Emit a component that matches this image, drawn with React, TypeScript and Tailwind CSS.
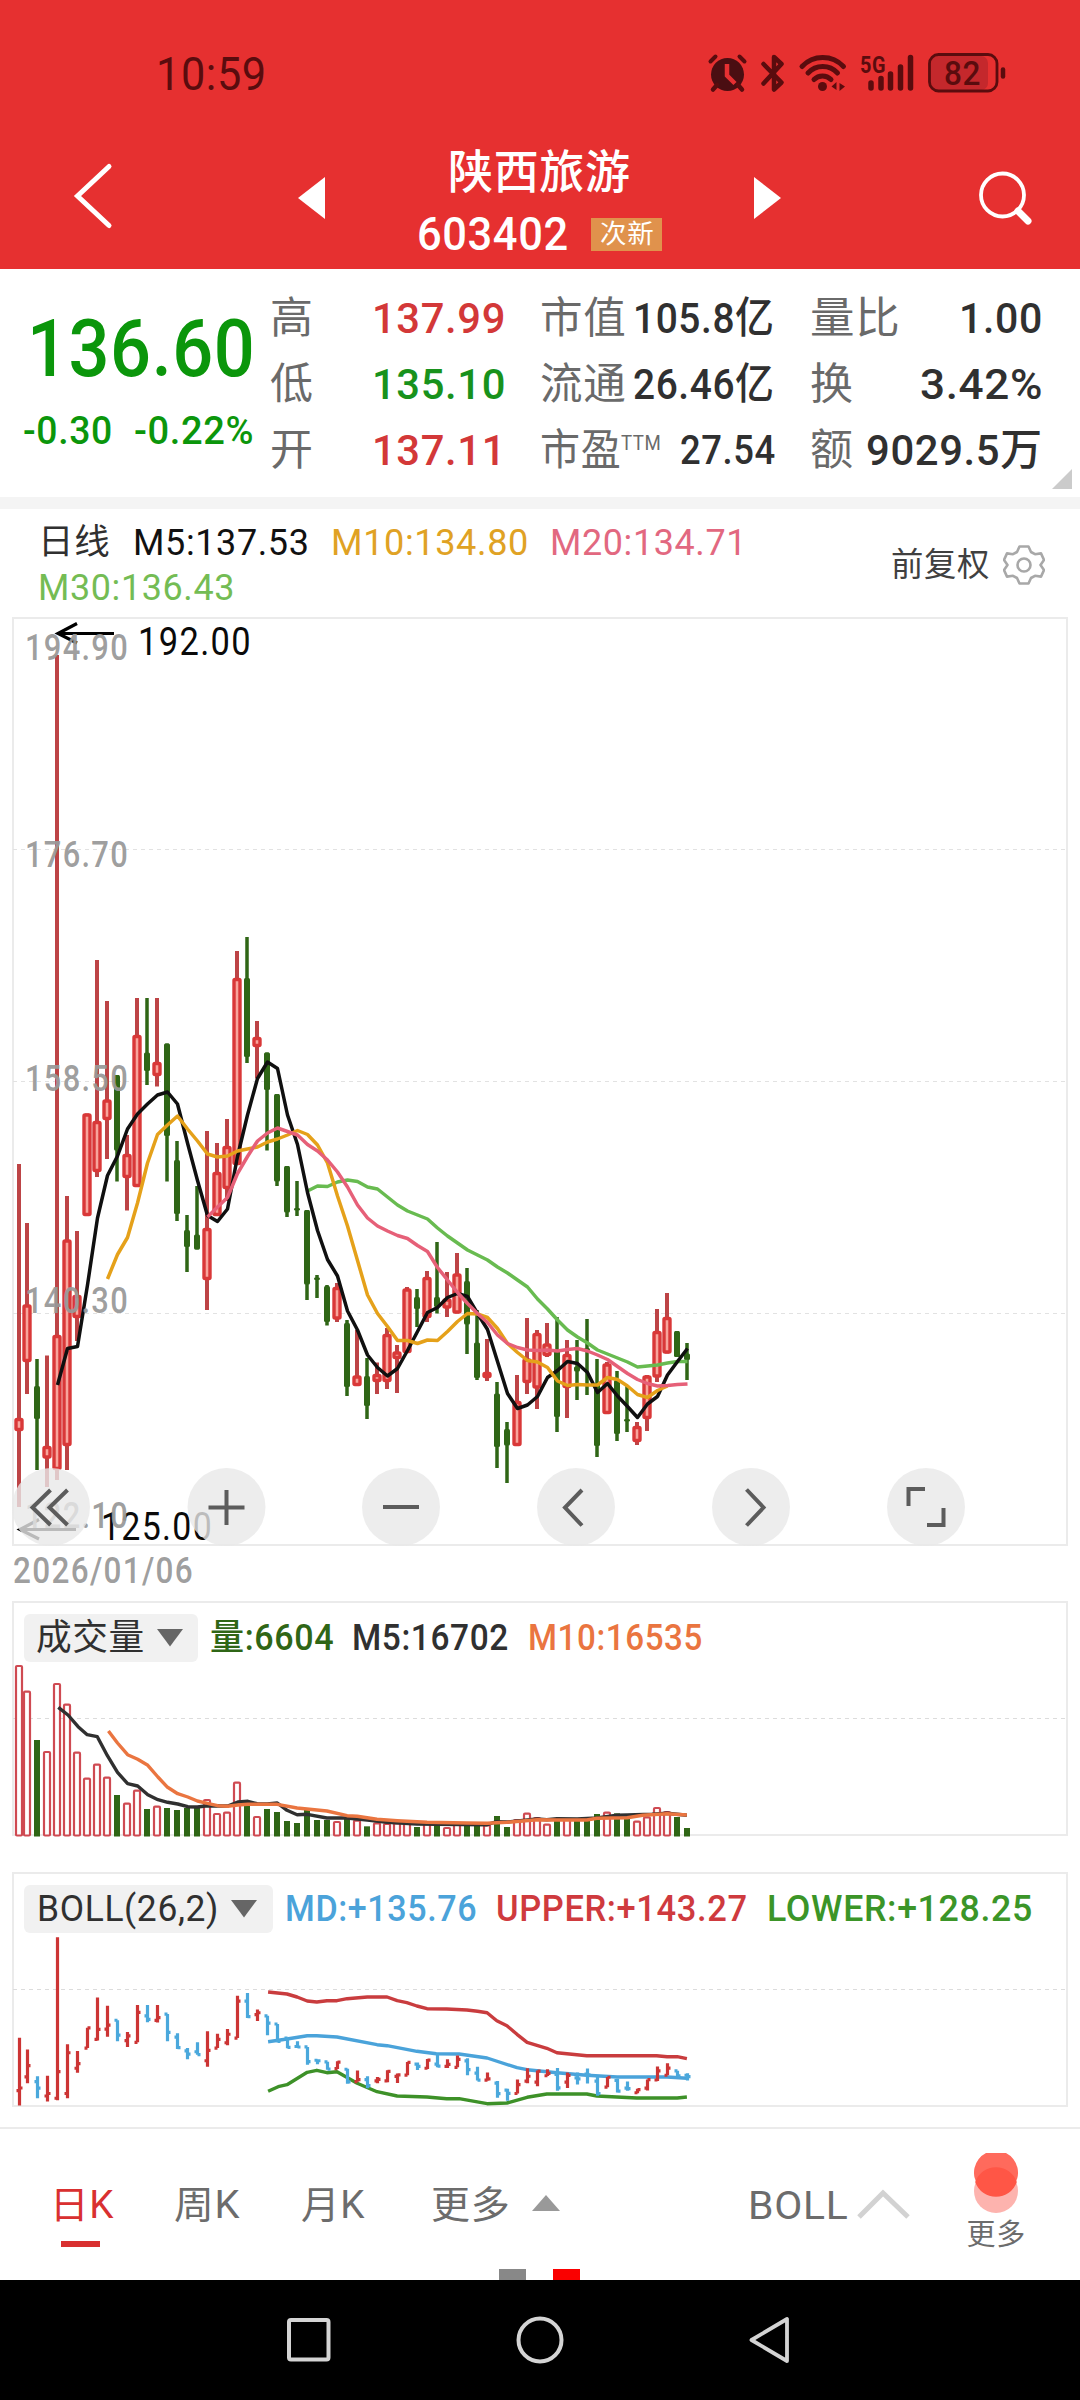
import React, { useLayoutEffect, useRef } from "react";

const FONT = "font-['Roboto','Noto_Sans_CJK_SC',sans-serif]";

/** One line of text that is condensed or widened to fill the width of its box. */
function Fit({ children, className = "" }: { children: React.ReactNode; className?: string }) {
  const box = useRef<HTMLDivElement>(null);
  const line = useRef<HTMLSpanElement>(null);
  useLayoutEffect(() => {
    if (!box.current || !line.current) return;
    line.current.style.transform = `scaleX(${box.current.clientWidth / line.current.offsetWidth})`;
  });
  return (
    <div ref={box} className={`shrink-0 whitespace-nowrap leading-none ${className}`}>
      <span ref={line} className="inline-block origin-left">
        {children}
      </span>
    </div>
  );
}

const RED = "#d93838";
const GREEN = "#2f6616";
const FRAME = "#ebebeb";

type Candle = [up: 0 | 1, high: number, top: number, bottom: number, low: number];

const candles: Candle[] = [
  [1, 1164, 1418, 1431, 1507], [1, 1223, 1304.5, 1362, 1394], [0, 1359, 1386, 1419, 1470], [1, 1355.5, 1446, 1458.5, 1487],
  [1, 655, 1335, 1470, 1480], [1, 1196, 1239.5, 1446, 1470], [1, 1231, 1295, 1318, 1341], [1, 1113.5, 1113.5, 1216, 1216],
  [1, 960, 1121, 1172, 1177], [1, 1001, 1099.5, 1120, 1159], [0, 1075, 1075, 1150.5, 1181.5], [1, 1135, 1154, 1178, 1210.5],
  [1, 998, 1035, 1187, 1187], [0, 998, 1052.5, 1071, 1085], [1, 998, 1062, 1076, 1086.5], [0, 1043.5, 1043.5, 1136, 1181.5],
  [0, 1141, 1160, 1214, 1221], [0, 1215, 1230, 1247, 1272], [0, 1186, 1234.5, 1249.5, 1249.5], [1, 1131, 1228, 1280, 1310],
  [1, 1143, 1172, 1216, 1216], [1, 1119, 1146, 1189, 1201], [1, 951, 978, 1165, 1165], [0, 937, 978, 1057, 1063],
  [1, 1021, 1037, 1047, 1078.5], [0, 1052.5, 1052.5, 1090, 1150.5], [0, 1094, 1094, 1181.5, 1186], [0, 1166, 1166, 1212.5, 1217],
  [0, 1181, 1208, 1210.5, 1216], [0, 1210, 1210, 1284.5, 1300], [0, 1275, 1277.5, 1280, 1298], [0, 1285, 1286, 1322, 1325.5],
  [1, 1283, 1287, 1319.5, 1322], [0, 1320, 1323, 1387, 1396], [1, 1330, 1375.5, 1386, 1386], [0, 1358, 1376, 1406, 1419],
  [1, 1362.5, 1374, 1382, 1394], [1, 1328, 1334, 1382, 1389], [1, 1345, 1351.5, 1359, 1393], [1, 1287, 1288.5, 1353, 1353],
  [0, 1289, 1297, 1309, 1327], [1, 1271, 1277, 1318, 1322], [0, 1242, 1297, 1307, 1313.5], [1, 1272, 1298.5, 1308.5, 1317],
  [1, 1253, 1273.5, 1313.5, 1313.5], [0, 1268, 1281, 1324.5, 1354], [0, 1310, 1342.5, 1378, 1380], [1, 1339, 1372, 1378, 1381],
  [0, 1382, 1393.5, 1447, 1468], [0, 1422, 1429, 1445.5, 1483], [1, 1375, 1401, 1446, 1446], [1, 1318, 1358.5, 1383, 1394],
  [1, 1330, 1333, 1388.5, 1409], [1, 1323, 1343.5, 1356, 1357], [0, 1317, 1349.5, 1417, 1432], [1, 1340, 1354, 1388, 1418],
  [0, 1340, 1366.5, 1371.5, 1400], [0, 1319, 1348, 1351, 1395], [0, 1359, 1383, 1446, 1457], [1, 1362, 1363.5, 1414, 1414],
  [0, 1371, 1380, 1434, 1441], [0, 1385, 1419, 1421.5, 1432], [1, 1422, 1426, 1442, 1445], [1, 1375, 1375.5, 1419, 1431],
  [1, 1309, 1331, 1377.5, 1382], [1, 1293, 1317, 1353.5, 1353.5], [0, 1331, 1331, 1357, 1357], [0, 1343, 1353.5, 1360, 1380],
];

const xOf = (i: number) => (i === 0 ? 19 : 17 + 10 * i);

/** Averages hold one value per day, beginning at the given day index. */
const averages: { color: string; start: number; ys: number[] }[] = [
  {
    color: "#68bb50", start: 29,
    ys: [1191, 1186, 1186.5, 1182, 1180, 1181.5, 1187, 1189, 1197, 1205, 1211, 1215, 1219, 1228, 1236, 1243, 1250, 1255, 1260, 1267, 1273, 1280, 1287, 1299, 1309, 1320, 1330, 1337, 1343, 1350, 1354, 1358, 1362, 1367, 1366, 1365, 1363, 1361.5, 1361.5],
  },
  {
    color: "#101010", start: 4,
    ys: [1385, 1348.5, 1346.5, 1285, 1218, 1175.5, 1156, 1129, 1114, 1104, 1095, 1092, 1104, 1143, 1180.5, 1215.5, 1221.5, 1209, 1156.5, 1115, 1078.5, 1062, 1068.5, 1115, 1144.5, 1192.5, 1230.5, 1259.5, 1276, 1311, 1330, 1355, 1367.5, 1376, 1368.5, 1350.5, 1331.5, 1312.5, 1307.5, 1297.5, 1293.5, 1296.5, 1313.5, 1329.5, 1361.5, 1393.5, 1408.5, 1405, 1396.5, 1377.5, 1370.5, 1361.5, 1363.5, 1372.5, 1392.5, 1383.5, 1396, 1406.5, 1417.5, 1404, 1396.5, 1375, 1361.5, 1348.5],
  },
  {
    color: "#e5a11a", start: 9,
    ys: [1279, 1254.5, 1237.5, 1203, 1163, 1134.5, 1125, 1116, 1129, 1141, 1154, 1157, 1156, 1151, 1149, 1147, 1142, 1139, 1135, 1130.5, 1134.5, 1145, 1163, 1196, 1226, 1260.5, 1295, 1313.5, 1326.5, 1340.5, 1340.5, 1343.5, 1340, 1340.5, 1331.5, 1321.5, 1313.5, 1314, 1317.5, 1328.5, 1343.5, 1352.5, 1360.5, 1362, 1367.5, 1381, 1385.5, 1384.5, 1385, 1385, 1377.5, 1379.5, 1386, 1394.5, 1397.5, 1390.5, 1386],
  },
  {
    color: "#e66078", start: 19,
    ys: [1217, 1207, 1197.5, 1173.5, 1156.5, 1141, 1133, 1128, 1131.5, 1135, 1144.5, 1151, 1160, 1172, 1187, 1205, 1218, 1226, 1231, 1235.5, 1238.5, 1245.5, 1251.5, 1267.5, 1280, 1292.5, 1303.5, 1313.5, 1322.5, 1335, 1343.5, 1347.5, 1350, 1350.5, 1350, 1351, 1349.5, 1348.5, 1351, 1355, 1359.5, 1366.5, 1373.5, 1379.5, 1383.5, 1386, 1385.5, 1384.5, 1384],
  },
];

/** Top edge of each volume bar, in thirds of a pixel below the panel's top. */
const volumeTops = [
  228, 305, 450, 486, 282, 344, 488, 566, 524, 563, 615, 641, 602, 657, 650, 654, 660, 654, 652, 630, 672, 668, 578, 648, 681, 657, 666,
  693, 699, 655, 690, 690, 696, 687, 692, 709, 700, 702, 700, 702, 711, 702, 706, 714, 704, 706, 706, 706, 678, 711, 690, 671, 684, 704,
  688, 690, 690, 692, 672, 668, 670, 684, 695, 682, 654, 666, 681, 714,
];

type Pt = [number, number];
const toPoints = (pts: Pt[]) => pts.map(([u, v]) => `${(u / 2.178).toFixed(1)},${(v / 3).toFixed(1)}`).join(" ");

const volM5: Pt[] = [[127, 352], [148, 375], [170, 410], [190, 434], [212, 440], [234, 497], [256, 547], [278, 581], [300, 588], [322, 614], [344, 629], [365, 637], [387, 642], [409, 650], [430, 651], [452, 647], [496, 648], [518, 636], [540, 634], [560, 641], [582, 642], [604, 639], [625, 661], [647, 674], [669, 673], [712, 684], [756, 684], [800, 690], [843, 697], [908, 702], [952, 703], [1061, 704], [1082, 695], [1104, 696], [1170, 687], [1191, 689], [1213, 686], [1257, 687], [1300, 684], [1344, 676], [1366, 675], [1420, 673], [1453, 670], [1496, 676]];
const volM10: Pt[] = [[236, 423], [256, 459], [278, 494], [300, 508], [322, 526], [344, 561], [365, 592], [387, 611], [409, 621], [430, 633], [452, 640], [474, 647], [496, 649], [518, 645], [540, 643], [604, 643], [647, 654], [712, 663], [756, 677], [778, 679], [821, 688], [865, 692], [930, 697], [1017, 699], [1061, 700], [1104, 697], [1170, 689], [1213, 690], [1278, 690], [1300, 685], [1366, 683], [1400, 676], [1453, 671], [1496, 675]];
const bollUpper: Pt[] = [[584, 396], [625, 402], [647, 411], [669, 423], [690, 426], [712, 422], [734, 422], [756, 416], [800, 411], [843, 411], [865, 422], [886, 428], [908, 438], [930, 446], [973, 447], [1017, 450], [1040, 454], [1061, 458], [1082, 482], [1104, 497], [1126, 523], [1148, 547], [1191, 565], [1213, 578], [1278, 587], [1430, 587], [1453, 590], [1475, 590], [1496, 596]];
const bollMid: Pt[] = [[584, 545], [625, 537], [669, 527], [690, 527], [734, 531], [821, 554], [843, 557], [908, 574], [950, 581], [1000, 582], [1061, 594], [1126, 623], [1148, 629], [1213, 638], [1278, 646], [1344, 651], [1453, 651], [1496, 655]];
const bollLower: Pt[] = [[584, 694], [606, 680], [625, 674], [669, 637], [690, 631], [712, 638], [734, 635], [778, 670], [821, 695], [865, 708], [930, 711], [973, 716], [1000, 716], [1061, 731], [1104, 729], [1148, 712], [1191, 702], [1278, 702], [1300, 708], [1387, 714], [1475, 714], [1496, 711]];

function StatusIcons() {
  return (
    <svg viewBox="700 40 320 70" className="h-[70px] w-[320px]" fill="none" stroke="#5a0c0e" strokeLinecap="round">
      <g>
        <circle cx="727.5" cy="74.5" r="16.5" fill="#4a0e12" stroke="none" />
        <path d="M710.5 61.5l5-5M744.5 61.5l-5-5" strokeWidth="4" />
        <path d="M717 85l-4 4.5M738 85l4 4.5" strokeWidth="4.5" />
        <path d="M727 64v11.500l8 8" stroke="#e63032" strokeWidth="4.5" strokeLinecap="butt" />
      </g>
      <path d="M763.5 64l18 18.5-7.500 7V57l7.500 7-18 19.500" strokeWidth="4.500" strokeLinejoin="round" />
      <g strokeWidth="5">
        <path d="M802 66.500a28.500 28.500 0 0 1 41.500 0" />
        <path d="M808 73a20 20 0 0 1 29.500 0" />
        <path d="M814 79.500a12 12 0 0 1 17 0" />
      </g>
      <circle cx="822.5" cy="86.5" r="4.5" fill="#5a0c0e" stroke="none" />
      <path d="M836.500 82v8l-5-3.500zM839.500 91v-8l5.500 3.500z" fill="#5a0c0e" stroke="none" />
      <text x="860" y="72.5" fontSize="23" fontWeight="700" textLength="26" lengthAdjust="spacingAndGlyphs" fill="#5a0c0e" stroke="none">5G</text>
      <path d="M871 83v5M881 78.500v9.500M890.500 74v14M900.500 67v21M910.500 57.500v30.500" strokeWidth="5.5" />
      <rect x="931" y="56" width="57" height="34" rx="7" fill="#c4282c" stroke="none" />
      <rect x="929.5" y="54.5" width="67.5" height="36.5" rx="9" strokeWidth="2.8" />
      <text x="944" y="85" fontSize="34" fontWeight="500" textLength="37" lengthAdjust="spacingAndGlyphs" fill="#5a0c0e" stroke="none">82</text>
      <path d="M1003 69.500v7" strokeWidth="4.5" />
    </svg>
  );
}

function Header() {
  return (
    <header className="h-[269px] bg-[#e63030] text-white">
      <div className="flex h-[110px] items-start justify-between pl-[156px] pr-[60px] pt-[40px]">
        <Fit className="mt-[11px] w-[111px] text-[46px] text-[#5a0c0e]">10:59</Fit>
        <StatusIcons />
      </div>
      <div className="flex h-[159px] items-start">
        <svg viewBox="60 110 60 150" className="ml-[60px] h-[150px] w-[60px]" fill="none" stroke="#fff" strokeWidth="5" strokeLinecap="round">
          <path d="M109 166.500L77.500 196l31.500 29.500" />
        </svg>
        <svg viewBox="290 110 40 150" className="ml-[170px] h-[150px] w-[40px]" fill="#fff">
          <path d="M298 198L325 177v42z" />
        </svg>
        <div className="ml-[87px] w-[281px] pt-[39px]">
          <Fit className="ml-[31px] w-[183px] text-[46px] font-medium">陕西旅游</Fit>
          <div className="mt-[16px] flex items-center">
            <Fit className="w-[152px] text-[46px] font-medium">603402</Fit>
            <div className="ml-[22px] flex h-[33px] w-[71px] items-center justify-center bg-[#e0924c]">
              <Fit className="w-[54px] text-[26px]">次新</Fit>
            </div>
          </div>
        </div>
        <svg viewBox="750 110 40 150" className="ml-[52px] h-[150px] w-[40px]" fill="#fff">
          <path d="M781 198L754 177v42z" />
        </svg>
        <svg viewBox="970 110 70 150" className="ml-[180px] h-[150px] w-[70px]" fill="none" stroke="#fff" strokeLinecap="round">
          <circle cx="1002.5" cy="195" r="21.5" strokeWidth="3.8" />
          <path d="M1018 211l10 10" strokeWidth="7" />
        </svg>
      </div>
    </header>
  );
}

function Stats() {
  return (
    <section className="relative flex h-[228px] bg-white text-[#6a6a6a]">
      <div className="w-[270px] pt-[40px] font-medium text-[#0b960b]">
        <Fit className="ml-[27px] w-[228px] text-[80px]">136.60</Fit>
        <div className="mt-[23px] flex">
          <Fit className="ml-[23px] w-[90px] text-[39px]">-0.30</Fit>
          <Fit className="ml-[21px] w-[120px] text-[39px]">-0.22%</Fit>
        </div>
      </div>
      <div className="grid w-[270px] grid-rows-[65px_66px_66px] items-center pt-[17px] text-[43px]">
        <div className="flex items-center"><Fit className="w-[44px]">高</Fit><Fit className="ml-[58px] w-[134px] font-medium text-[#d33838]">137.99</Fit></div>
        <div className="flex items-center"><Fit className="w-[44px]">低</Fit><Fit className="ml-[58px] w-[134px] font-medium text-[#18921c]">135.10</Fit></div>
        <div className="flex items-center"><Fit className="w-[44px]">开</Fit><Fit className="ml-[58px] w-[134px] font-medium text-[#d33838]">137.11</Fit></div>
      </div>
      <div className="grid w-[270px] grid-rows-[65px_66px_66px] items-center pt-[17px] text-[43px]">
        <div className="flex items-center"><Fit className="w-[86px]">市值</Fit><Fit className="ml-[7px] w-[142px] font-medium text-[#303030]">105.8亿</Fit></div>
        <div className="flex items-center"><Fit className="w-[86px]">流通</Fit><Fit className="ml-[7px] w-[142px] font-medium text-[#303030]">26.46亿</Fit></div>
        <div className="flex items-center">
          <Fit className="w-[81px]">市盈</Fit>
          <Fit className="-mt-[14px] w-[40px] text-[21px]">TTM</Fit>
          <Fit className="ml-[19px] w-[96px] text-[41px] font-medium text-[#303030]">27.54</Fit>
        </div>
      </div>
      <div className="grid w-[233px] grid-rows-[65px_66px_66px] items-center pt-[17px] text-[43px]">
        <div className="flex items-center justify-between"><Fit className="w-[90px]">量比</Fit><Fit className="w-[84px] font-medium text-[#303030]">1.00</Fit></div>
        <div className="flex items-center justify-between"><Fit className="w-[44px]">换</Fit><Fit className="w-[123px] font-medium text-[#303030]">3.42%</Fit></div>
        <div className="flex items-center justify-between"><Fit className="w-[44px]">额</Fit><Fit className="w-[177px] font-medium text-[#303030]">9029.5万</Fit></div>
      </div>
      <svg viewBox="0 0 20 20" className="absolute bottom-[8px] right-[8px] h-[20px] w-[20px]" fill="#cbcbcb"><path d="M20 0v20H0z" /></svg>
    </section>
  );
}

function Legend() {
  return (
    <section className="flex h-[101px] justify-between bg-white pl-[38px] pr-[35px]">
      <div>
        <div className="flex h-[46px] items-center pt-[20px]">
          <Fit className="w-[72px] text-[35px] text-[#303030]">日线</Fit>
          <Fit className="ml-[23px] w-[177px] text-[37px] text-[#111]">M5:137.53</Fit>
          <Fit className="ml-[21px] w-[198px] text-[37px] text-[#e0a224]">M10:134.80</Fit>
          <Fit className="ml-[21px] w-[197px] text-[37px] text-[#e26880]">M20:134.71</Fit>
        </div>
        <div className="flex h-[45px] items-center pt-[19px]">
          <Fit className="w-[197px] text-[37px] text-[#74bc54]">M30:136.43</Fit>
        </div>
      </div>
      <div className="flex items-center pt-[10px]">
        <Fit className="mr-[13px] w-[99px] text-[33px] text-[#404040]">前复权</Fit>
        <svg viewBox="-21 -21 42 42" className="h-[42px] w-[42px]" fill="none" stroke="#a8a8a8" strokeWidth="2.6" strokeLinejoin="round">
          <path d="M-4.500 -18.500h9l2.500 5.500 4 2.200 6-.8 3 6.500-3.500 5.100 3.500 5.100-3 6.500-6-.8-4 2.200-2.500 5.500h-9l-2.500-5.500-4-2.200-6 .8-3-6.500 3.500-5.100-3.500-5.100 3-6.500 6 .8 4-2.200z" />
          <circle r="6.5" />
        </svg>
      </div>
    </section>
  );
}

function PriceChart() {
  const labels: [string, number][] = [["194.90", 660], ["176.70", 867], ["158.50", 1090.5], ["140.30", 1313], ["122.10", 1528]];
  return (
    <svg viewBox="0 610 1080 980" className="block h-[980px] w-[1080px]">
      <rect x="13" y="618" width="1054" height="927" fill="#fff" stroke={FRAME} strokeWidth="2" />
      {[849.5, 1081.5, 1313.5].map((y) => (
        <path key={y} d={`M13 ${y}H1067`} stroke="#e2e2e2" strokeWidth="1.2" strokeDasharray="4 4" />
      ))}
      {candles.map(([up, high, top, bottom, low], i) => {
        const x = xOf(i);
        return up ? (
          <g key={i}>
            <path d={`M${x} ${high}V${low}`} stroke="#bd4446" strokeWidth="4" />
            <rect x={x - 3} y={top + 1.5} width="6" height={Math.max(bottom - top - 3, 2)} rx="1" fill="#f8a59c" stroke={RED} strokeWidth="3.4" />
          </g>
        ) : (
          <g key={i} fill={GREEN}>
            <rect x={x - 1.75} y={high} width="3.5" height={low - high} />
            <rect x={x - 3} y={top} width="6" height={bottom - top} rx="1.5" />
          </g>
        );
      })}
      {averages.map(({ color, start, ys }) => (
        <polyline key={color} fill="none" stroke={color} strokeWidth="3.5" strokeLinejoin="round" points={ys.map((y, k) => `${xOf(start + k) + 0.5},${y}`).join(" ")} />
      ))}
      <g fill="none" stroke="#000" strokeWidth="3.2">
        <path d="M114 633.500H58M77 623.500l-19 10 19 9.500" />
        <path d="M76 1529.500H20M39 1519.500l-19 10 19 9.500" />
      </g>
      <g fontSize="38" fill="#0a0a0a" letterSpacing="1.5">
        <text x="138" y="655" textLength="114" lengthAdjust="spacingAndGlyphs">192.00</text>
        <text x="101" y="1540" textLength="112" lengthAdjust="spacingAndGlyphs">125.00</text>
      </g>
      <g fontSize="36" fontWeight="500" fill="#999" fillOpacity=".95" letterSpacing="1.5">
        {labels.map(([t, y]) => (
          <text key={t} x="25" y={y} textLength="104" lengthAdjust="spacingAndGlyphs">{t}</text>
        ))}
        <text x="13" y="1583" textLength="181" lengthAdjust="spacingAndGlyphs">2026/01/06</text>
      </g>
      <g fill="#e8e8e8" fillOpacity=".8">
        {[51, 226.5, 401, 576, 751, 926].map((x) => <circle key={x} cx={x} cy="1507" r="39" />)}
      </g>
      <g fill="none" stroke="#5c5c5c" strokeWidth="4">
        <path d="M50.500 1490l-18 17.500 18 17.500M67.500 1490l-18 17.500 18 17.500" />
        <path d="M208.500 1507.500h36M226.500 1490v35" />
        <path d="M383 1507h36" />
        <path d="M582 1490l-17 17.500 17 18" />
        <path d="M746.500 1489.500l17 18-17 18" />
        <path d="M908.500 1506v-17h16.500M943.500 1508v17H927" />
      </g>
    </svg>
  );
}

function Picker({ children }: { children: React.ReactNode }) {
  return (
    <div className="flex h-[48px] items-center rounded-[6px] bg-[#f1f1f1] text-[#303030]">
      {children}
      <svg viewBox="0 0 28 20" className="ml-[11px] h-[20px] w-[28px]" fill="#666"><path d="M1 1h26L14 18.500z" /></svg>
    </div>
  );
}

function Volume() {
  return (
    <section className="relative h-[270px]">
      <svg viewBox="0 0 1080 270" className="absolute inset-0 h-[270px] w-[1080px]">
        <rect x="13" y="12" width="1054" height="233" fill="none" stroke={FRAME} strokeWidth="2" />
        <path d="M13 128.500H1067" stroke="#dcdcdc" strokeWidth="1.2" strokeDasharray="4 4" />
        {volumeTops.map((t, i) => {
          const x = xOf(i);
          const y = t / 3;
          return candles[i][0] ? (
            <rect key={i} x={x - 3} y={y} width="6" height={245.5 - y} rx="1" fill="#fff" stroke="#cf4a52" strokeWidth="2.2" />
          ) : (
            <rect key={i} x={x - 3} y={y} width="6" height={246.5 - y} fill={GREEN} />
          );
        })}
        <polyline points={toPoints(volM5)} fill="none" stroke="#303030" strokeWidth="3.4" strokeLinejoin="round" />
        <polyline points={toPoints(volM10)} fill="none" stroke="#ea7540" strokeWidth="3.4" strokeLinejoin="round" />
      </svg>
      <div className="relative flex items-center pl-[24px] pt-[24px] text-[36px] font-medium">
        <div className="w-[174px]">
          <Picker><Fit className="ml-[12px] w-[109px] text-[36px] font-normal">成交量</Fit></Picker>
        </div>
        <Fit className="ml-[12px] w-[124px] text-[#2f6616]">量:6604</Fit>
        <Fit className="ml-[18px] w-[157px] text-[#303030]">M5:16702</Fit>
        <Fit className="ml-[19px] w-[175px] text-[#ea7540]">M10:16535</Fit>
      </div>
    </section>
  );
}

function Boll() {
  const scale = (y: number) => 77.3 + (y - 655) * 0.1975;
  return (
    <section className="relative h-[267px]">
      <svg viewBox="0 0 1080 267" className="absolute inset-0 h-[267px] w-[1080px]">
        <rect x="13" y="13" width="1054" height="233" fill="none" stroke={FRAME} strokeWidth="2" />
        <path d="M13 129.500H1067" stroke="#dcdcdc" strokeWidth="1.2" strokeDasharray="4 4" />
        <g fill="none" strokeWidth="3.4" strokeLinejoin="round">
          <polyline points={toPoints(bollUpper)} stroke="#c93c3e" />
          <polyline points={toPoints(bollMid)} stroke="#4aa3da" />
          <polyline points={toPoints(bollLower)} stroke="#3d9128" />
        </g>
        {candles.map(([up, high, top, bottom, low], i) => {
          const x = xOf(i) + 0.5;
          const open = scale(up ? bottom : top);
          const close = scale(up ? top : bottom);
          return (
            <path key={i} d={`M${x} ${scale(high)}V${scale(low)}M${x - 3} ${open}H${x}M${x} ${close}H${x + 3}`} fill="none" stroke={up ? "#cc3434" : "#4aa8dc"} strokeWidth="3.2" />
          );
        })}
      </svg>
      <div className="relative flex items-center pl-[24px] pt-[25px] text-[36px] font-medium">
        <div className="w-[249px]">
          <Picker><Fit className="ml-[13px] w-[182px] text-[36px] font-normal">BOLL(26,2)</Fit></Picker>
        </div>
        <Fit className="ml-[12px] w-[192px] text-[#4ba3da]">MD:+135.76</Fit>
        <Fit className="ml-[19px] w-[252px] text-[#cf3a3e]">UPPER:+143.27</Fit>
        <Fit className="ml-[19px] w-[266px] text-[#3b9528]">LOWER:+128.25</Fit>
      </div>
    </section>
  );
}

function Tabs() {
  return (
    <nav className="relative flex h-[153px] items-start border-t-2 border-[#ebebeb] bg-white pl-[50px] text-[38px] text-[#6c6c6c]">
      <div className="pt-[57px] text-[#d93030]">
        <Fit className="w-[64px]">日K</Fit>
        <div className="ml-[11px] mt-[17px] h-[6px] w-[39px] bg-[#d93030]" />
      </div>
      <Fit className="ml-[60px] mt-[57px] w-[66px]">周K</Fit>
      <Fit className="ml-[61px] mt-[57px] w-[64px]">月K</Fit>
      <Fit className="ml-[66px] mt-[57px] w-[79px]">更多</Fit>
      <svg viewBox="0 0 28 16" className="ml-[22px] mt-[66px] h-[16px] w-[28px]" fill="#999"><path d="M0 16L14 0l14 16z" /></svg>
      <Fit className="ml-[188px] mt-[58px] w-[100px]">BOLL</Fit>
      <svg viewBox="0 0 56 34" className="ml-[7px] mt-[59px] h-[34px] w-[56px]" fill="none" stroke="#d2d2d2" strokeWidth="5"><path d="M4 29L28 5l25 24" /></svg>
      <div className="ml-[56px] flex w-[58px] flex-col items-center pt-[24px]">
        <svg viewBox="0 0 44 62" className="h-[62px] w-[44px]">
          <path d="M22 16a22 22 0 1 1 0 44a22 22 0 1 1 0-44z" fill="#fdb3ae" />
          <path d="M12 0h20a22 22 0 1 1-20 0z" fill="#ff6a5c" />
          <path d="M1.200 29a22 22 0 0 1 41.600 0a22 22 0 0 1-41.600 0z" fill="#ff5646" />
        </svg>
        <Fit className="mt-[6px] w-[59px] text-[29px]">更多</Fit>
      </div>
      <div className="absolute bottom-0 left-[499px] flex gap-[27px]">
        <div className="h-[11px] w-[27px] bg-[#888]" />
        <div className="h-[11px] w-[27px] bg-[#fa0000]" />
      </div>
    </nav>
  );
}

function SystemBar() {
  return (
    <footer className="flex h-[120px] items-center bg-black pl-[284px]">
      <svg viewBox="0 0 50 50" className="h-[50px] w-[50px]" fill="none" stroke="#d4d4d4" strokeWidth="4"><rect x="5" y="5" width="39.5" height="39.5" rx="2" /></svg>
      <svg viewBox="0 0 50 50" className="ml-[181px] h-[50px] w-[50px]" fill="none" stroke="#d4d4d4" strokeWidth="4"><circle cx="25" cy="25" r="21.5" /></svg>
      <svg viewBox="0 0 50 50" className="ml-[179px] h-[50px] w-[50px]" fill="none" stroke="#d4d4d4" strokeWidth="3.8" strokeLinejoin="round"><path d="M7.500 25L43 4v42z" /></svg>
    </footer>
  );
}

export default function App() {
  return (
    <main className={`h-[2400px] w-[1080px] overflow-hidden bg-white tracking-[0.04em] ${FONT}`}>
      <Header />
      <Stats />
      <div className="h-[12px] bg-[#f4f4f4]" />
      <Legend />
      <PriceChart />
      <Volume />
      <Boll />
      <Tabs />
      <SystemBar />
    </main>
  );
}
